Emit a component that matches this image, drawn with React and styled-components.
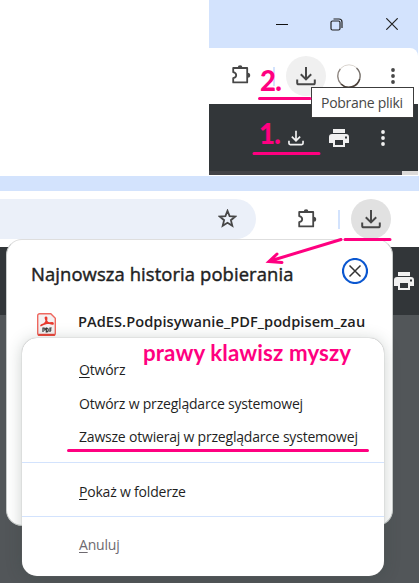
import React from "react";
import styled, { createGlobalStyle } from "styled-components";

const PINK = "#ff0080";

const GlobalStyle = createGlobalStyle`
  * { box-sizing: border-box; }
  body { margin: 0; background: #fff; }
`;

const Page = styled.main`
  position: relative;
  width: 419px;
  height: 583px;
  overflow: hidden;
  background: #fff;
  color: #1f1f1f;
  font-family: "Open Sans", "Noto Sans", sans-serif;
`;

const Glyph = styled.svg`
  display: block;
  flex: none;
  width: ${(p) => p.$w}px;
  height: ${(p) => p.$h || p.$w}px;
  margin-left: ${(p) => p.$ml || 0}px;
  margin-top: ${(p) => p.$mt || 0}px;
  color: ${(p) => p.$color || "#474747"};
  fill: currentColor;
`;

const UpperWindow = styled.section`
  width: 209px;
  height: 175px;
  margin: 0 1px 1px 209px;
  background: #d3e3fd;
`;

const TitleBar = styled.div`
  display: flex;
  align-items: center;
  height: 48px;
`;

const UpperToolbar = styled.div`
  display: flex;
  align-items: center;
  height: 56px;
  background: #fff;
  border-top-right-radius: 8px;
`;

const PdfBar = styled.div`
  display: flex;
  align-items: center;
  height: 67px;
  background: #323639;
`;

const PdfEdge = styled.div`
  height: 4px;
  background: linear-gradient(90deg, #424347 193px, #dcdad9 193px);
`;

const RoundButton = styled.div`
  display: flex;
  align-items: center;
  justify-content: center;
  flex: none;
  width: 40px;
  height: 40px;
  margin-left: ${(p) => p.$ml}px;
  border-radius: 50%;
  background: ${(p) => p.$bg};
`;

const Divider = styled.div`
  flex: none;
  width: 2px;
  height: 19px;
  margin-left: ${(p) => p.$ml}px;
  background: #d3e3fd;
`;

const Tooltip = styled.div`
  position: absolute;
  left: 311px;
  top: 87px;
  width: 103px;
  height: 31px;
  padding-left: 9px;
  border: 1px solid #3c3c3c;
  background: #fff;
  color: #474747;
  font-size: 14px;
  line-height: 29px;
  letter-spacing: -0.28px;
  white-space: nowrap;
`;

const LowerWindow = styled.section`
  height: 407px;
  background: #525659;
`;

const Strip = styled.div`
  height: 15px;
  background: #d3e3fd;
`;

const LowerToolbar = styled.div`
  display: flex;
  align-items: center;
  height: 56px;
  background: #fff;
`;

const AddressBar = styled.div`
  display: flex;
  align-items: center;
  justify-content: flex-end;
  width: 256px;
  height: 40px;
  padding-right: 19px;
  border-radius: 0 20px 20px 0;
  background: #ebf0f9;
`;

const LowerPdfBar = styled.div`
  display: flex;
  align-items: center;
  justify-content: flex-end;
  height: 68px;
  padding-right: 5px;
  background: #323639;
`;

const Popup = styled.section`
  position: absolute;
  left: 6px;
  top: 239px;
  width: 387px;
  height: 287px;
  border: 1px solid #c9cccb;
  border-top-color: #dedede;
  border-radius: 16px;
  background: #fff;
`;

const PopupHeader = styled.header`
  display: flex;
  align-items: center;
  justify-content: space-between;
  height: 62px;
  padding: 0 24px 0 24px;
`;

const Heading = styled.h1`
  margin: 5px 0 0;
  font-size: 18.4px;
  font-weight: 400;
  -webkit-text-stroke: 0.45px currentColor;
  line-height: 24px;
  letter-spacing: 0.1px;
  white-space: nowrap;
`;

const FileRow = styled.div`
  display: flex;
  align-items: center;
  height: 48px;
  padding-left: 30px;
`;

const FileName = styled.div`
  margin: -11px 0 0 22px;
  font-size: 14.6px;
  font-weight: 600;
  line-height: 20px;
  letter-spacing: 0.05px;
  white-space: nowrap;
`;

const Menu = styled.nav`
  position: absolute;
  left: 22px;
  top: 338px;
  width: 362px;
  height: 238px;
  padding-top: 15px;
  border-radius: 15px;
  background: #fff;
  box-shadow: 0 0 1px #888, 0 2px 16px rgba(45, 65, 55, 0.25);
`;

const MenuItem = styled.div`
  height: 33.5px;
  padding-left: 57px;
  color: ${(p) => (p.$muted ? "#6e6a70" : "#1f1f1f")};
  font-size: 14px;
  line-height: 33px;
  letter-spacing: -0.2px;
  white-space: nowrap;
`;

const Key = styled.span`
  text-decoration: underline;
  text-decoration-thickness: 1px;
  text-underline-offset: 2px;
`;

const Separator = styled.div`
  height: 1px;
  margin: ${(p) => p.$m};
  background: #d3e3fd;
`;

const Note = styled.div`
  position: absolute;
  left: ${(p) => p.$x}px;
  top: ${(p) => p.$y}px;
  color: ${PINK};
  font-family: Lato, "Open Sans", sans-serif;
  font-size: ${(p) => p.$size}px;
  font-weight: ${(p) => p.$weight || 700};
  line-height: 30px;
  letter-spacing: ${(p) => p.$ls || 0}px;
  white-space: nowrap;
`;

const Marks = styled.svg`
  position: absolute;
  inset: 0;
  fill: none;
  stroke: ${PINK};
  stroke-width: 3;
  stroke-linecap: round;
`;

const Puzzle = (props) => (
  <Glyph $w={22} viewBox="0 0 22 22" {...props}>
    <path
      d="M3.2 4h14v14.4h-14v-4.2c2.100-.5 3-1.500 3-3s-.9-2.500-3-3z"
      fill="none"
      stroke="currentColor"
      strokeWidth="1.800"
      strokeLinejoin="round"
    />
    <path d="M7.800 3.600a2.300 2.300 0 0 1 4.600 0zM17.700 8.700a2.500 2.500 0 0 1 0 5z" />
  </Glyph>
);

const Download = ({ thin, ...props }) => (
  <Glyph $w={20} viewBox="0 0 20 20" {...props}>
    <path
      d="M10 1v12M4.800 8.300 10 13.400l5.200-5.100M1.200 13.500v3.200c0 1 .6 1.600 1.600 1.600h14.400c1 0 1.600-.6 1.600-1.600v-3.200"
      fill="none"
      stroke="currentColor"
      strokeWidth={thin ? 2.1 : 2}
    />
  </Glyph>
);

const Printer = (props) => (
  <Glyph $w={20} $h={18} $color="#f1f1f1" viewBox="0 0 20 18" {...props}>
    <path
      fillRule="evenodd"
      d="M4 0h12v4H4zM3 5h14a3 3 0 0 1 3 3v6h-4v4H4v-4H0V8a3 3 0 0 1 3-3zm3 6v5h8v-5zm10-3.500v2h2v-2z"
    />
  </Glyph>
);

const Dots = (props) => (
  <Glyph $w={4} $h={16} viewBox="0 0 4 16" {...props}>
    <circle cx="2" cy="2" r="1.900" />
    <circle cx="2" cy="8" r="1.900" />
    <circle cx="2" cy="14" r="1.900" />
  </Glyph>
);

const Star = () => (
  <Glyph $w={19} $mt={-2} viewBox="0 0 19 19">
    <path
      d="m9.500 1.800 2.100 5.300 5.700.4-4.400 3.700 1.400 5.500-4.800-3-4.800 3 1.400-5.500L1.700 7.500l5.700-.4z"
      fill="none"
      stroke="currentColor"
      strokeWidth="1.800"
    />
  </Glyph>
);

const Avatar = () => (
  <Glyph $w={24} $ml={11} viewBox="0 0 24 24">
    <circle cx="12" cy="12" r="11.200" fill="none" stroke="#dad5cf" />
    <path
      d="M3.300 5A11.200 11.200 0 0 0 4 20"
      fill="none" stroke="#8d8580" strokeWidth="1.300"
    />
    <path
      d="M4 20a11.200 11.200 0 0 0 18.700-5"
      fill="none" stroke="#4a4039" strokeWidth="1.600"
    />
    <path d="M19.500 4a11.200 11.200 0 0 1 3.200 11" fill="none" stroke="#746e69" strokeWidth="1.300" />
  </Glyph>
);

const PdfFile = () => (
  <Glyph $w={19} $h={23} $mt={-4} viewBox="0 0 19 23">
    <path
      d="M3 .7h10.800l4.500 4.600V20.500a2 2 0 0 1-2 2H2.700a2 2 0 0 1-2-2V2.700a2 2 0 0 1 2-2z"
      fill="#f4f1f2" stroke="#ef685f" strokeWidth="1.400"
    />
    <path d="M1.200 21.800h16.600" stroke="#e94338" strokeWidth="2" />
    <path
      d="M4.500 12.300c4-1.500 5.400-4.300 5.200-7.300-.1-1.200-1.500-1-1.300.2.500 3.400 3 5.500 6.900 5.900 1.200.2 1-1.400-.2-1.400-4 0-7 .6-10 2-1.200.600-1.500 1.400-.6.600z"
      fill="none" stroke="#e8392e" strokeWidth="1.500"
    />
    <path
      d="M6 19v-4h1c1.600 0 1.600 2.200 0 2.200M9.300 15v4h.6c1.800 0 1.800-4 0-4zM13 19v-4h1.700M13 17h1.500"
      fill="none" stroke="#333" strokeWidth="1.200"
    />
  </Glyph>
);

const WindowControls = () => (
  <TitleBar>
    <Glyph $w={12} $ml={67} viewBox="0 0 12 12" $color="#111">
      <path d="M0 6h12v1H0z" />
    </Glyph>
    <Glyph $w={13} $ml={42} viewBox="0 0 13 13" $color="#222">
      <path
        d="M2.500 3h6a1.500 1.500 0 0 1 1.500 1.500v6a1.500 1.500 0 0 1-1.500 1.500h-6A1.500 1.500 0 0 1 1 10.500v-6A1.500 1.500 0 0 1 2.500 3zM3.500 1H9a3 3 0 0 1 3 3v6"
        fill="none" stroke="currentColor" strokeWidth="1.200"
      />
    </Glyph>
    <Glyph $w={12} $ml={43} viewBox="0 0 12 12" $color="#222">
      <path d="m.3.300 11.400 11.400m0-11.400L.3 11.700" stroke="currentColor" strokeWidth="1.200" />
    </Glyph>
  </TitleBar>
);

export default function App() {
  return (
    <Page>
      <GlobalStyle />
      <UpperWindow>
        <WindowControls />
        <UpperToolbar>
          <Puzzle $ml={21} $mt={-2} />
          <Divider $ml={21} />
          <RoundButton $ml={11} $bg="#f0f0f0">
            <Download />
          </RoundButton>
          <Avatar />
          <Dots $ml={30} $mt={-1} />
        </UpperToolbar>
        <PdfBar>
          <Download thin $w={16} $ml={79} $mt={1} $color="#f1f1f1" />
          <Printer $ml={25} $mt={1} />
          <Dots $ml={32} $mt={1} $color="#f1f1f1" />
        </PdfBar>
        <PdfEdge />
      </UpperWindow>

      <LowerWindow>
        <Strip />
        <LowerToolbar>
          <AddressBar>
            <Star />
          </AddressBar>
          <Puzzle $ml={40} $mt={-1} />
          <Divider $ml={20} />
          <RoundButton $ml={11} $bg="#e1e1e1">
            <Download />
          </RoundButton>
        </LowerToolbar>
        <LowerPdfBar>
          <Printer />
        </LowerPdfBar>
      </LowerWindow>

      <Popup>
        <PopupHeader>
          <Heading>Najnowsza historia pobierania</Heading>
          <Glyph $w={26} $color="#333" viewBox="0 0 26 26">
            <circle cx="13" cy="13" r="12" fill="none" stroke="#0b57d0" strokeWidth="2.200" />
            <path d="m7.500 7.500 11 11m0-11-11 11" stroke="currentColor" strokeWidth="1.500" />
          </Glyph>
        </PopupHeader>
        <FileRow>
          <PdfFile />
          <FileName>PAdES.Podpisywanie_PDF_podpisem_zau</FileName>
        </FileRow>
      </Popup>

      <Menu>
        <MenuItem><Key>O</Key>twórz</MenuItem>
        <MenuItem>Otwórz w przeglądarce systemowej</MenuItem>
        <MenuItem>Zawsze otwieraj w przeglądarce systemowej</MenuItem>
        <Separator $m="8.500px 0 11.500px" />
        <MenuItem><Key>P</Key>okaż w folderze</MenuItem>
        <Separator $m="7.500px 0 11.500px" />
        <MenuItem $muted><Key>A</Key>nuluj</MenuItem>
      </Menu>

      <Tooltip>Pobrane pliki</Tooltip>

      <Note $x={260} $y={66} $size={27.5} $weight={900} $ls={-0.6}>2.</Note>
      <Note $x={259} $y={119} $size={27.5} $weight={900} $ls={-0.6}>1.</Note>
      <Note $x={143} $y={338} $size={22.3} $ls={0.12}>prawy klawisz myszy</Note>
      <Marks width="419" height="583" viewBox="0 0 419 583">
        <path d="M259.500 98.500H310M254 153.500h65M345 239.500h45M68.500 450.500H367.500" />
        <path d="M341 239.500 270 261M277 254l-8 7.500 13 1" />
      </Marks>
    </Page>
  );
}
